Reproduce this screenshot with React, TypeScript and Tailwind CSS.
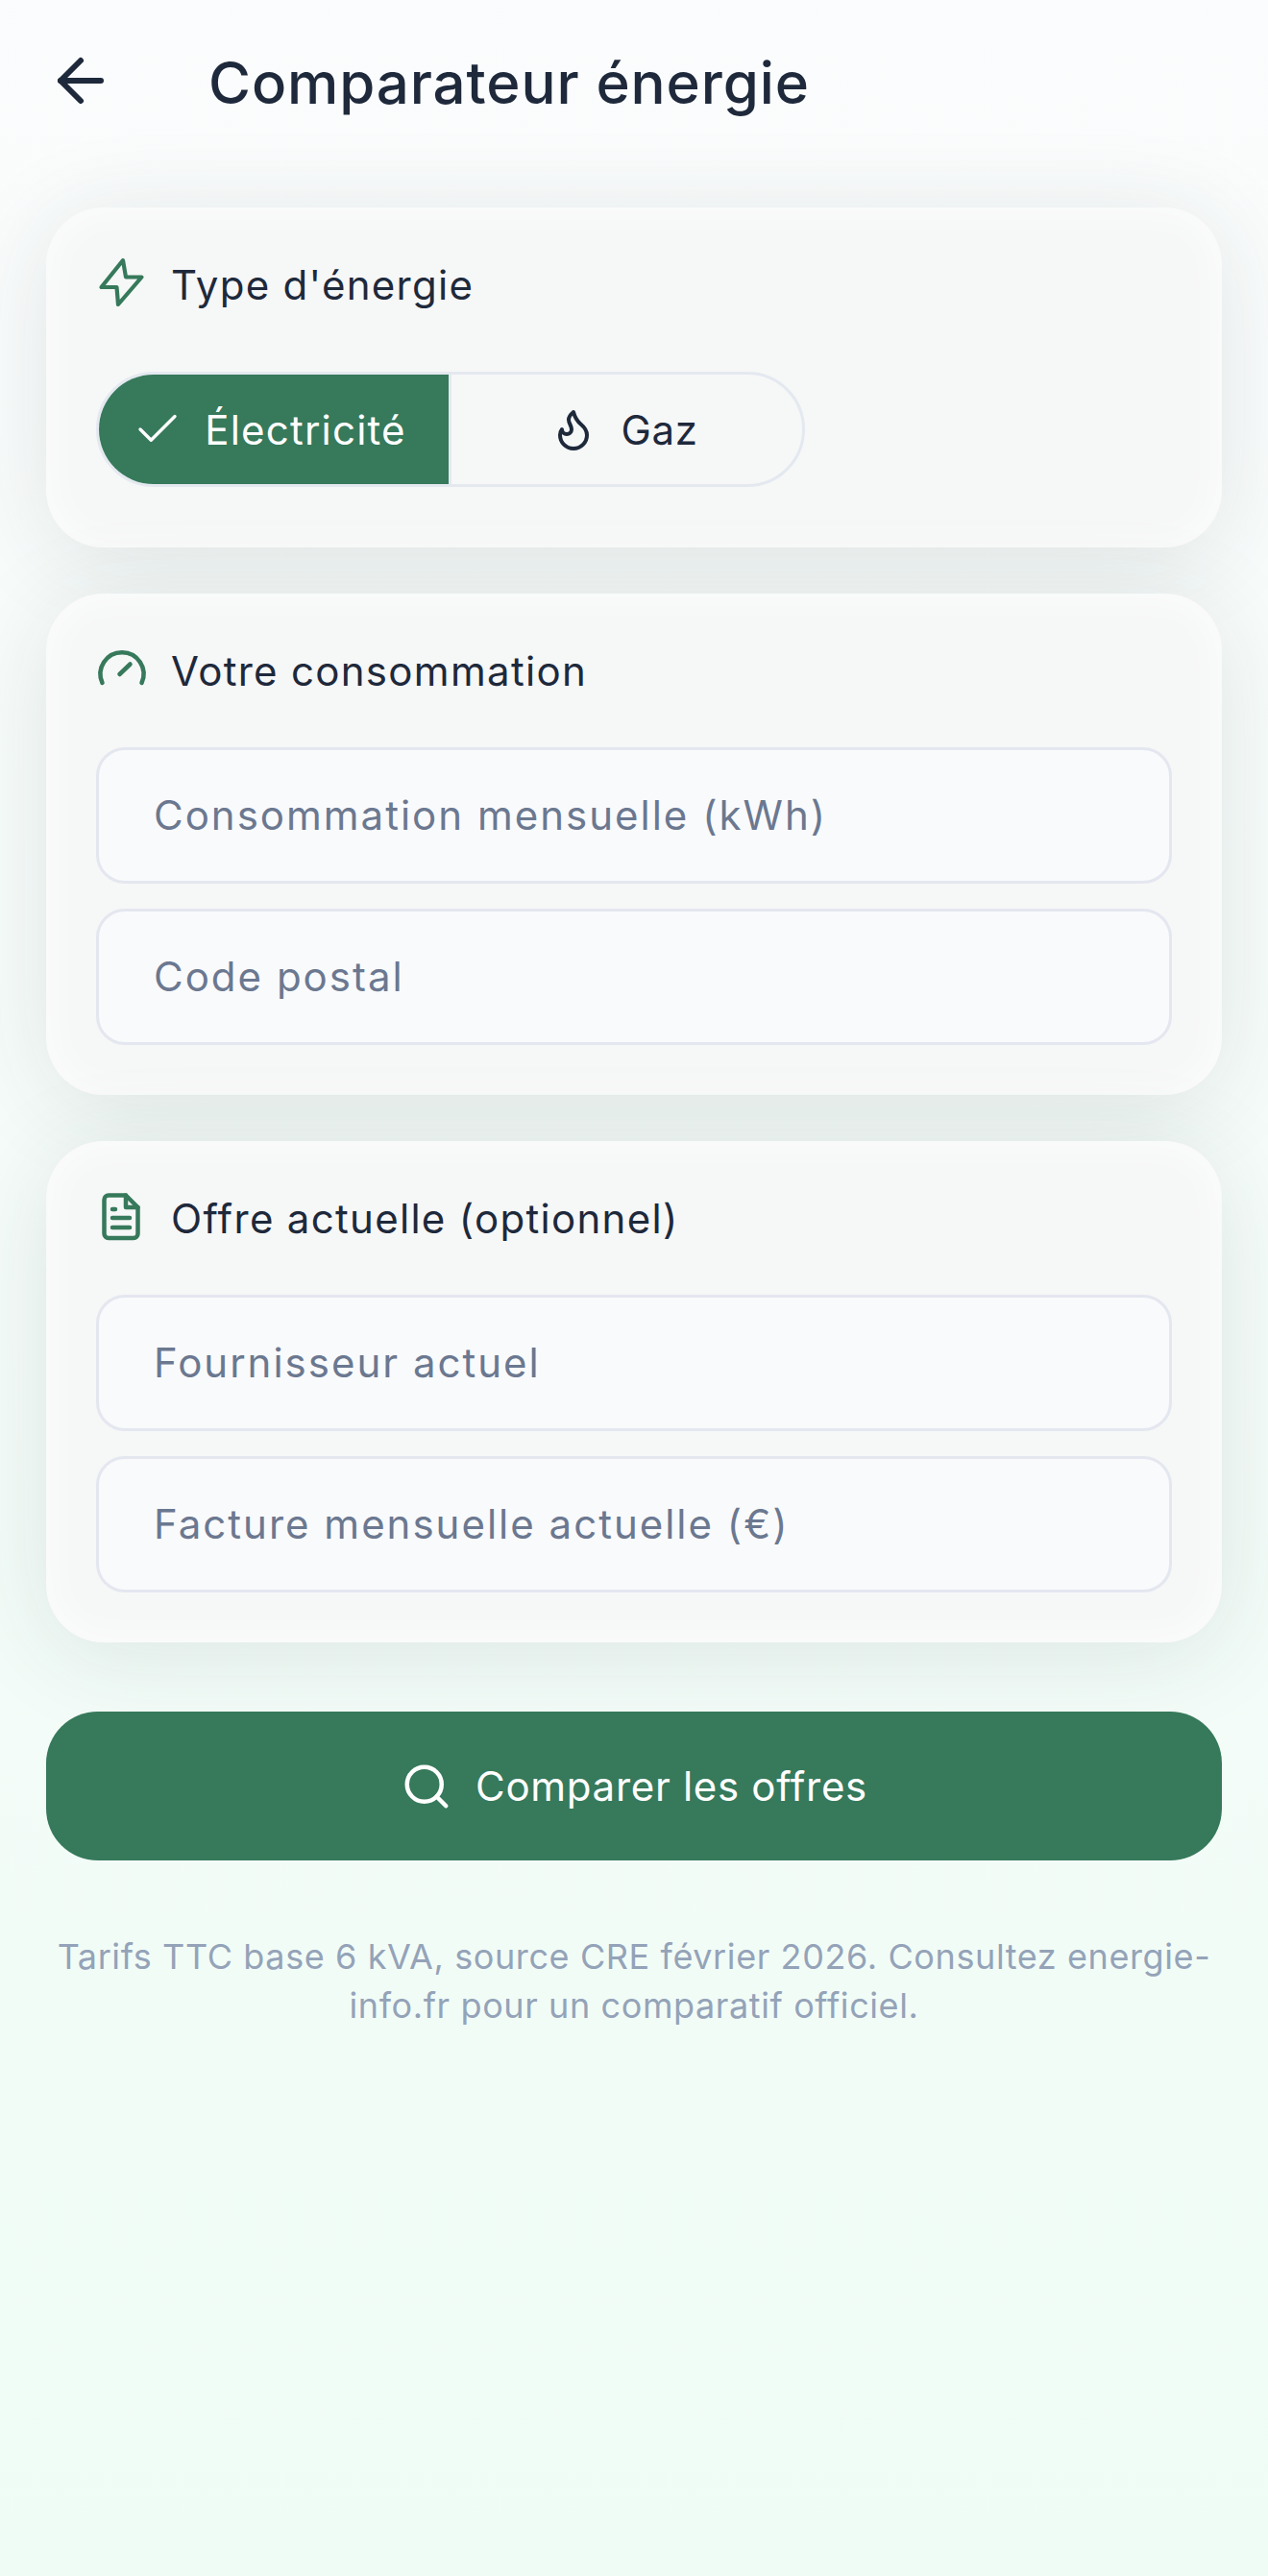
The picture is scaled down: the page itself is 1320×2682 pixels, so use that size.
import { ArrowLeft, Check, Flame, Search } from "lucide-react";

function Bolt() {
  return (
    <svg width="50" height="52" viewBox="0 4 50 52" className="overflow-visible" fill="none" stroke="#36795b" strokeWidth="4.2" strokeLinejoin="round" strokeLinecap="round">
      <path d="M26 3 3.5 31H19.5L21 49 45.5 20.5H29L26 3Z" />
    </svg>
  );
}

function Gauge() {
  return (
    <svg width="50" height="38" viewBox="0 5 50 38" className="overflow-visible" fill="none" stroke="#36795b" strokeWidth="4.5" strokeLinecap="round">
      <path d="M4.5 35A22.5 22.5 0 1 1 45.5 35" />
      <path d="M22.5 26 33.5 15.5" />
    </svg>
  );
}

function FileIcon() {
  return (
    <svg width="42" height="52" viewBox="0 2 42 52" className="overflow-visible" fill="none" stroke="#36795b" strokeWidth="4.5" strokeLinecap="round" strokeLinejoin="round">
      <path d="M25 2.5H7A4.5 4.5 0 0 0 2.5 7V42.5A4.5 4.5 0 0 0 7 47H33A4.5 4.5 0 0 0 37.5 42.5V15L25 2.5Z" />
      <path d="M25 2.5V15H37.5" />
      <path d="M11 17H14" />
      <path d="M11 26H29" />
      <path d="M11 36H29" />
    </svg>
  );
}

function SectionTitle({ icon, label }: { icon: React.ReactNode; label: string }) {
  return (
    <div className="flex h-[60px] items-center">
      <div className="flex w-[54px] shrink-0 items-center justify-center">{icon}</div>
      <h2 className="ml-[24px] pb-[2px] text-[42px] font-normal leading-[60px] tracking-[1.3px] text-[#1e293b]">{label}</h2>
    </div>
  );
}

function Field({ placeholder }: { placeholder: string }) {
  return (
    <input
      placeholder={placeholder}
      className="h-[142px] w-full rounded-[30px] border-[3px] border-[#e4e7ef] bg-[#f9fafc] px-[57px] pb-[2px] text-[42px] font-normal tracking-[2px] text-[#1e293b] outline-none placeholder:text-[#6b7890]"
    />
  );
}

const cardClass =
  "rounded-[60px] bg-[#f6f7f7] p-[52px] shadow-[inset_0_0_44px_rgba(255,255,255,0.8),0_12px_100px_rgba(35,50,50,0.115)]";

export default function App() {
  return (
    <div className="min-h-[2682px] w-[1320px] bg-gradient-to-b from-[#fbfcfd] to-[#effcf5] font-['Inter',sans-serif]">
      <header className="flex h-[168px] items-center pl-[48px]">
        <ArrowLeft size={72} strokeWidth={2} color="#1e293b" />
        <h1 className="ml-[97px] mt-[4px] text-[60px] font-[550] leading-[72px] tracking-[0.9px] text-[#1e293b]">Comparateur énergie</h1>
      </header>

      <main className="mt-[48px] flex flex-col gap-[48px] px-[48px]">
        <section className={`${cardClass} pb-[63px]`}>
          <SectionTitle icon={<Bolt />} label="Type d'énergie" />
          <div className="mt-[59px] flex h-[120px] w-[738px] overflow-hidden rounded-[60px] border-[3px] border-[#e4e9f0]">
            <button className="flex w-[364px] items-center justify-center gap-[22px] bg-[#36795b] pl-[2px] pr-[12px] text-[42px] font-normal tracking-[1.2px] text-white">
              <Check size={54} strokeWidth={1.5} />
              Électricité
            </button>
            <button className="flex flex-1 items-center justify-center gap-[26px] border-l-[3px] border-[#e4e9f0] pr-[6px] text-[42px] font-normal tracking-[0.6px] text-[#1e293b]">
              <Flame size={48} strokeWidth={2} />
              Gaz
            </button>
          </div>
        </section>

        <section className={cardClass}>
          <SectionTitle icon={<Gauge />} label="Votre consommation" />
          <div className="mt-[48px] flex flex-col gap-[26px]">
            <Field placeholder="Consommation mensuelle (kWh)" />
            <Field placeholder="Code postal" />
          </div>
        </section>

        <section className={cardClass}>
          <SectionTitle icon={<FileIcon />} label="Offre actuelle (optionnel)" />
          <div className="mt-[48px] flex flex-col gap-[26px]">
            <Field placeholder="Fournisseur actuel" />
            <Field placeholder="Facture mensuelle actuelle (€)" />
          </div>
        </section>

        <button className="mt-[24px] flex h-[155px] items-center justify-center gap-[24px] rounded-[54px] bg-[#36795b] text-[42px] font-normal tracking-[0.7px] text-white">
          <Search size={54} strokeWidth={2} />
          Comparer les offres
        </button>

        <p className="mt-[27px] text-center text-[36px] leading-[51px] tracking-[0.6px] text-[#94a3b8]">
          Tarifs TTC base 6 kVA, source CRE février 2026. Consultez energie-info.fr pour un comparatif officiel.
        </p>
      </main>
    </div>
  );
}
